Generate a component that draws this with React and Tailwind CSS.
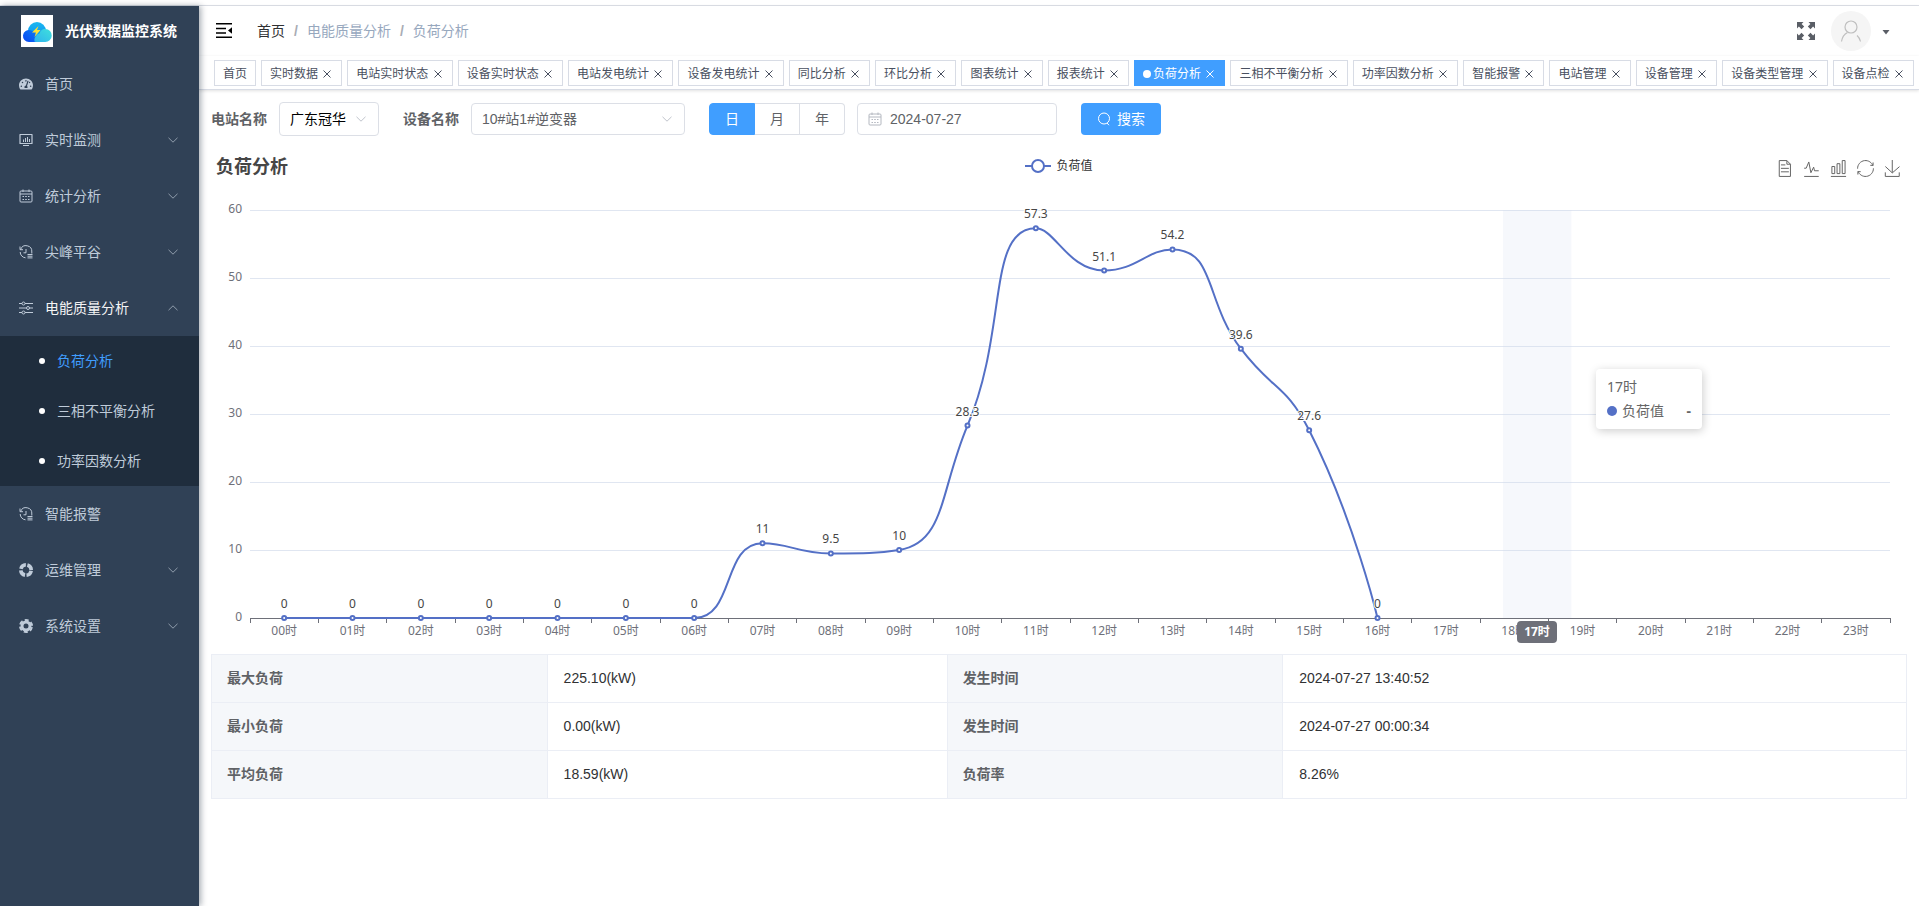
import { useLayoutEffect, useRef, useState } from "react";
import { FaTachometerAlt } from "react-icons/fa";

const HOURS = Array.from({ length: 24 }, (_, i) => String(i).padStart(2, "0") + "时");
const LOADS = [0, 0, 0, 0, 0, 0, 0, 11, 9.5, 10, 28.3, 57.3, 51.1, 54.2, 39.6, 27.6, 0];

const TAGS = [
  "首页", "实时数据", "电站实时状态", "设备实时状态", "电站发电统计", "设备发电统计",
  "同比分析", "环比分析", "图表统计", "报表统计", "负荷分析", "三相不平衡分析",
  "功率因数分析", "智能报警", "电站管理", "设备管理", "设备类型管理", "设备点检",
];

const SUMMARY = [
  ["最大负荷", "225.10(kW)", "发生时间", "2024-07-27 13:40:52"],
  ["最小负荷", "0.00(kW)", "发生时间", "2024-07-27 00:00:34"],
  ["平均负荷", "18.59(kW)", "负荷率", "8.26%"],
];

const TOOLS = [
  { name: "数据视图", d: "M17.5,17.3H33 M45.4,29.5h-28 M11.5,2v56H51V14.8L38.4,2H11.5z M38.4,2.2v12.7H51 M45.4,41.7h-28" },
  { name: "切换为折线图", d: "M4.1,28.9h7.1l9.3-22l7.4,38l9.7-19.7l3,12.8h14.9M4.1,58h51.4" },
  { name: "切换为柱状图", d: "M6.7,22.9h10V48h-10V22.9zM24.9,13h10v35h-10V13zM43.2,2h10v46h-10V2zM3.1,58h53.7" },
  { name: "还原", d: "M47,18.9h9.8V8.7 M56.3,20.1 C52.1,9,40.5,0.6,26.8,2.1C12.6,3.7,1.6,16.2,2.1,30.6 M13,41.1H3.1v10.2 M3.7,39.9c4.2,11.1,15.8,19.5,29.5,18 c14.2-1.6,25.2-14.1,24.7-28.5" },
  { name: "保存为图片", d: "M4.7,22.9L29.3,45.5L54.7,23.4M4.6,43.6L4.6,58L53.8,58L53.8,43.6M29.2,45.1L29.2,0" },
];

const Chevron = ({ up = false, className = "" }) => (
  <svg className={className} width="12" height="12" viewBox="0 0 12 12" fill="none" stroke="currentColor">
    <path d={up ? "M1.5 8.2 6 3.8l4.5 4.4" : "M1.5 3.8 6 8.2l4.5-4.4"} />
  </svg>
);

const Line = ({ children }) => (
  <svg width="14" height="14" viewBox="0 0 14 14" fill="none" stroke="currentColor">
    {children}
  </svg>
);

const MonitorIcon = () => (
  <Line>
    <path d="M1 1.500h12v9H1z" strokeLinejoin="round" strokeWidth="1.2" />
    <path d="M4.500 9V6.500M6.500 9V5M8.500 9V4M10.500 9V6M4 12.500h6" />
  </Line>
);

const CalendarIcon = () => (
  <Line>
    <rect x="1" y="2" width="12" height="11" rx="1" />
    <path d="M1 5h12M4 .5v2.5M10 .5v2.5M3.5 7.5h1.5M6.2 7.5h1.6M9 7.5h1.5M3.5 10.5h1.5M6.2 10.5h1.6M9 10.5h1.5" />
  </Line>
);

const HistoryIcon = () => (
  <Line>
    <path d="M1 1.5v3.2h3M1.6 4.4A5.8 5.8 0 0 1 12.8 7v1.5M1.2 7a5.8 5.8 0 0 0 5.3 5.8M7 4v3.8H4.5" />
    <path d="M8.5 9.5h5M8.5 11.2h5M8.5 12.9h5" />
  </Line>
);

const SlidersIcon = () => (
  <Line>
    <path d="M0 2.5h3M6 2.5h8M0 7h7.5M10.5 7H14M0 11.5h3M6 11.5h8" />
    <circle cx="4.5" cy="2.5" r="1.5" />
    <circle cx="9" cy="7" r="1.5" />
    <circle cx="4.5" cy="11.5" r="1.5" />
  </Line>
);

const LifebuoyIcon = () => (
  <svg width="14" height="14" viewBox="0 0 14 14" fill="none" stroke="currentColor" strokeWidth="3.6">
    <circle cx="7" cy="7" r="5.2" strokeDasharray="6.6 1.57" strokeDashoffset="-.8" />
  </svg>
);

const GearIcon = () => (
  <svg width="14" height="14" viewBox="0 0 14 14" fill="none" stroke="currentColor">
    <circle cx="7" cy="7" r="4" strokeWidth="3" />
    <circle cx="7" cy="7" r="6" strokeWidth="2" strokeDasharray="4 2.28" strokeDashoffset="-1.14" />
  </svg>
);

const MENU = [
  { title: "首页", icon: <FaTachometerAlt size={14} /> },
  { title: "实时监测", icon: <MonitorIcon />, group: true },
  { title: "统计分析", icon: <CalendarIcon />, group: true },
  { title: "尖峰平谷", icon: <HistoryIcon />, group: true },
  {
    title: "电能质量分析",
    icon: <SlidersIcon />,
    group: true,
    children: ["负荷分析", "三相不平衡分析", "功率因数分析"],
  },
  { title: "智能报警", icon: <HistoryIcon /> },
  { title: "运维管理", icon: <LifebuoyIcon />, group: true },
  { title: "系统设置", icon: <GearIcon />, group: true },
];

const Logo = () => (
  <svg className="bg-white" width="32" height="32" viewBox="0 0 32 32">
    <defs>
      <linearGradient id="cloudTop" x1="0" y1="0" x2="0" y2="1">
        <stop offset="0" stopColor="#1cb8ee" />
        <stop offset="1" stopColor="#0a8cf5" />
      </linearGradient>
      <linearGradient id="cloudLeft" x1="0" y1="1" x2="1" y2="0">
        <stop offset="0" stopColor="#0a45f2" />
        <stop offset="1" stopColor="#0b7df5" />
      </linearGradient>
      <linearGradient id="cloudRight" x1="0" y1="1" x2="1" y2="0">
        <stop offset="0" stopColor="#2fb4ee" />
        <stop offset="1" stopColor="#3fe0dc" />
      </linearGradient>
    </defs>
    <path d="M7 16a9 9 0 1 1 18 0l-9 8z" fill="url(#cloudTop)" />
    <path d="M8 27a6 6 0 1 1 1.500-11.800c4 .8 6.500 4.300 6.500 8.800l-1 3z" fill="url(#cloudLeft)" />
    <path d="M13.500 26.500c-.5-4 1.500-7 5-8 1-3.500 3.500-5 6-4.500a6.500 6.500 0 0 1-.5 13H15z" fill="url(#cloudRight)" />
    <path d="M17.500 11l-6.500 6.500h4L13.500 22l6-7h-3.500z" fill="#ffe033" />
  </svg>
);

const Sidebar = () => (
  <aside className="relative z-10 w-[199px] shrink-0 bg-[#304156] text-[#bfcbd9] shadow-[2px_0_6px_rgba(0,21,41,0.35)]">
    <a href="#" className="flex h-[50px] items-center gap-3 pl-[21px] text-sm font-bold text-white">
      <Logo />
      光伏数据监控系统
    </a>
    <nav>
      <ul>
        {MENU.map((item) => (
          <li key={item.title}>
            <a
              href="#"
              className={`flex h-14 items-center gap-3 pr-5 pl-[19px] ${item.children ? "text-[#f4f4f5]" : ""}`}
            >
              <span className="text-[#bfcbd9]">{item.icon}</span>
              <span className="flex-1">{item.title}</span>
              {item.group && <Chevron up={!!item.children} className="text-[#909dac]" />}
            </a>
            {item.children && (
              <ul className="bg-[#1f2d3d]">
                {item.children.map((child, i) => (
                  <li key={child}>
                    <a
                      href="#"
                      className={`flex h-[50px] items-center gap-3 pl-[39px] ${i === 0 ? "text-[#409eff]" : ""}`}
                    >
                      <span className="h-1.5 w-1.5 rounded-full bg-white" />
                      {child}
                    </a>
                  </li>
                ))}
              </ul>
            )}
          </li>
        ))}
      </ul>
    </nav>
  </aside>
);

const Navbar = () => (
  <header className="flex h-[50px] items-center bg-white pl-[15px] shadow-[0_1px_4px_rgba(0,21,41,0.08)]">
    <button aria-label="折叠菜单" className="text-black">
      <svg width="20" height="20" viewBox="0 0 20 20" fill="currentColor">
        <path d="M2 2h16v1.500H2zM2 6.800h10v1.500H2zM2 11.200h10v1.500H2zM2 15.500h16V17H2zM18 6.300v6.400L14 9.500z" />
      </svg>
    </button>
    <nav className="ml-[23px] flex gap-[9px] text-[#97a8be]">
      <a href="#" className="text-[#303133]">首页</a>
      <span className="font-bold text-[#a8acb4]">/</span>
      <span>电能质量分析</span>
      <span className="font-bold text-[#a8acb4]">/</span>
      <span>负荷分析</span>
    </nav>
    <div className="ml-auto flex items-center pr-7">
      <button aria-label="全屏" className="text-[#5a5e66]">
        <svg width="20" height="20" viewBox="0 0 20 20" fill="currentColor">
          <path d="M1 1h6.5L5.600 2.900l2.600 2.600-2.700 2.700-2.600-2.600L1 7.500zM19 1v6.500l-1.900-1.900-2.600 2.600-2.700-2.700 2.600-2.600L12.500 1zM1 19v-6.500l1.900 1.900 2.600-2.600 2.700 2.700-2.600 2.600L7.500 19zM19 19h-6.500l1.900-1.900-2.600-2.600 2.700-2.700 2.600 2.600 1.900-1.900z" />
        </svg>
      </button>
      <button aria-label="用户菜单" className="ml-[15px] flex items-center gap-2.5">
        <span className="flex h-10 w-10 items-center justify-center rounded-full bg-[#f5f5f5]">
          <svg width="22" height="22" viewBox="0 0 22 22" fill="none" stroke="#bfbfbf" strokeWidth="1.2">
            <circle cx="11" cy="7" r="6" />
            <path d="M1.500 21.500c.8-5 3-7.500 6-9M17 15.500c1.800 1.500 3 3.500 3.500 6" />
          </svg>
        </span>
        <svg className="mt-0.5" width="10" height="10" viewBox="0 0 10 10" fill="#5a5e66">
          <path d="M1.500 3h7L5 7.500z" />
        </svg>
      </button>
    </div>
  </header>
);

const TagsView = () => (
  <nav className="flex h-[34px] gap-[5px] overflow-hidden border-b border-[#d8dce5] bg-white pt-1 pl-[15px] text-xs whitespace-nowrap shadow-[0_1px_3px_rgba(0,0,0,0.12)]">
    {TAGS.map((tag, i) => {
      const active = tag === "负荷分析";
      return (
        <span
          key={tag}
          className={`flex h-[26px] shrink-0 items-center border px-2 pt-0.5 ${
            active ? "border-[#409eff] bg-[#409eff] text-white" : "border-[#d8dce5] bg-white text-[#495060]"
          }`}
        >
          {active && <span className="mr-0.5 h-2 w-2 rounded-full bg-white" />}
          <a href="#" className="whitespace-pre">{i === 0 ? tag : tag + " "}</a>
          {i > 0 && (
            <button aria-label={`关闭${tag}`}>
              <svg width="12" height="12" viewBox="0 0 12 12" fill="none" stroke="currentColor">
                <path d="M2.500 2.500l7 7M9.500 2.500l-7 7" />
              </svg>
            </button>
          )}
        </span>
      );
    })}
  </nav>
);

const FilterBar = () => {
  const [range, setRange] = useState("日");
  const [date, setDate] = useState("2024-07-27");

  return (
    <form className="flex items-center text-[#606266]" onSubmit={(e) => e.preventDefault()}>
      <label htmlFor="station" className="mr-3 font-bold">电站名称</label>
      <span className="relative mr-6">
        <select id="station" className="block h-[34px] w-[100px] appearance-none rounded border border-[#dcdfe6] bg-white px-2.5 text-black">
          <option>广东冠华</option>
        </select>
        <Chevron className="pointer-events-none absolute top-[11px] right-3 text-[#c0c4cc]" />
      </span>

      <label htmlFor="device" className="mr-3 font-bold">设备名称</label>
      <span className="relative mr-6">
        <select id="device" className="block h-8 w-[214px] appearance-none rounded border border-[#dcdfe6] bg-white px-2.5">
          <option>10#站1#逆变器</option>
        </select>
        <Chevron className="pointer-events-none absolute top-2.5 right-3 text-[#c0c4cc]" />
      </span>

      <fieldset className="mr-3 flex h-8">
        {["日", "月", "年"].map((r) => (
          <label
            key={r}
            className={`relative flex items-center border-y border-r px-[15px] first:rounded-l first:border-l last:rounded-r ${
              range === r ? "border-[#409eff] bg-[#409eff] text-white" : "border-[#dcdfe6] bg-white"
            }`}
          >
            <input type="radio" name="range" className="sr-only" checked={range === r} onChange={() => setRange(r)} />
            {r}
          </label>
        ))}
      </fieldset>

      <label className="mr-6 flex h-8 w-[200px] items-center rounded border border-[#dcdfe6] bg-white pl-2.5">
        <span className="text-[#b4b8c0]"><CalendarIcon /></span>
        <input
          type="text"
          aria-label="日期"
          className="ml-2 w-full outline-none"
          value={date}
          onChange={(e) => setDate(e.target.value)}
        />
      </label>

      <button className="flex h-8 items-center gap-1.5 rounded bg-[#409eff] px-4 text-white">
        <svg width="14" height="14" viewBox="0 0 14 14" fill="none" stroke="currentColor">
          <circle cx="7" cy="6.5" r="5.5" />
          <path d="M10 11l2 2.2" />
        </svg>
        搜索
      </button>
    </form>
  );
};

// Bezier smoothing that keeps the control points between neighbouring points
const between = (v, a, b) => Math.max(Math.min(v, Math.max(a, b)), Math.min(a, b));

const smoothPath = (pts) => {
  const k = 0.5;
  let d = `M${pts[0][0]},${pts[0][1]}`;
  let c0 = pts[0];
  for (let i = 1; i < pts.length; i++) {
    const [px, py] = pts[i - 1];
    const [x, y] = pts[i];
    let c1 = [x, y];
    let next0 = [x, y];
    if (i < pts.length - 1) {
      const [nx, ny] = pts[i + 1];
      const prevLen = Math.hypot(x - px, y - py);
      const nextLen = Math.hypot(nx - x, ny - y);
      const ratio = nextLen / (nextLen + prevLen);
      const n0x = between(x + (nx - px) * k * ratio, x, nx);
      const n0y = between(y + (ny - py) * k * ratio, y, ny);
      c1 = [
        between(x - ((n0x - x) * prevLen) / nextLen, px, x),
        between(y - ((n0y - y) * prevLen) / nextLen, py, y),
      ];
      next0 = [x + ((x - c1[0]) * nextLen) / prevLen, y + ((y - c1[1]) * nextLen) / prevLen];
    }
    d += `C${c0[0]},${c0[1]},${c1[0]},${c1[1]},${x},${y}`;
    c0 = next0;
  }
  return d;
};

const LoadChart = () => {
  const box = useRef(null);
  const [width, setWidth] = useState(1200);

  useLayoutEffect(() => {
    const measure = () => setWidth(box.current.clientWidth);
    measure();
    const ro = new ResizeObserver(measure);
    ro.observe(box.current);
    return () => ro.disconnect();
  }, []);

  const left = 39;
  const right = width - 17;
  const top = 28;
  const bottom = 436;
  const band = (right - left) / 24;
  const xAt = (i) => left + band * (i + 0.5);
  const yAt = (v) => bottom - (v / 60) * (bottom - top);
  const points = LOADS.map((v, i) => [xAt(i), yAt(v)]);
  const pointer = Math.round(left + (right - left) * 0.785);

  return (
    <section className="mt-3.5">
      <div className="grid h-8 grid-cols-3 items-center">
        <h2 className="pt-0.5 pl-[5px] text-lg font-bold text-[#464646]">负荷分析</h2>
        <div className="flex items-center justify-center gap-[5px] text-xs text-[#333]">
          <svg width="26" height="14" viewBox="0 0 26 14" fill="white" stroke="#5470c6" strokeWidth="2">
            <path d="M0 7h26" />
            <circle cx="13" cy="7" r="6" />
          </svg>
          负荷值
        </div>
        <div className="flex justify-end gap-2.5 pr-1.5">
          {TOOLS.map((tool) => (
            <button key={tool.name} aria-label={tool.name}>
              <svg className="mt-1 overflow-visible" width="17" height="17" viewBox="0 0 60 60" fill="none" stroke="#666">
                <path d={tool.d} vectorEffect="non-scaling-stroke" />
              </svg>
            </button>
          ))}
        </div>
      </div>

      <div ref={box} className="relative font-['Noto_Sans','Noto_Sans_CJK_SC',sans-serif] text-xs">
        <svg className="block w-full" height="464">
          {[0, 10, 20, 30, 40, 50, 60].map((v) => (
            <g key={v}>
              {v > 0 && (
                <path d={`M${left} ${yAt(v) + 0.5}H${right}`} stroke="#e0e6f1" shapeRendering="crispEdges" />
              )}
              <text x={left - 8} y={yAt(v) + 3} textAnchor="end" fill="#6e7079">{v}</text>
            </g>
          ))}
          <rect x={pointer - 34} y={top} width={band} height={bottom - top} fill="rgba(210,219,238,0.2)" />
          <path d={`M${left} ${bottom + 0.5}H${right}`} stroke="#6e7079" shapeRendering="crispEdges" />
          {Array.from({ length: 25 }, (_, i) => (
            <path
              key={i}
              d={`M${Math.floor(left + band * i) + 0.5} ${bottom}v5`}
              stroke="#6e7079"
              shapeRendering="crispEdges"
            />
          ))}
          {HOURS.map((h, i) => (
            <text key={h} x={xAt(i)} y="453" textAnchor="middle" fill="#6e7079">{h}</text>
          ))}
          <path d={smoothPath(points)} fill="none" stroke="#5470c6" strokeWidth="2" />
          {points.map(([x, y], i) => (
            <circle key={i} cx={x} cy={y} r="2" fill="white" stroke="#5470c6" strokeWidth="2" />
          ))}
          {points.map(([x, y], i) => (
            <text
              key={i}
              x={x}
              y={y - 10}
              textAnchor="middle"
              fill="#464646"
              stroke="white"
              strokeWidth="2"
              paintOrder="stroke"
            >
              {LOADS[i]}
            </text>
          ))}
        </svg>

        {/* Axis pointer label */}
        <div
          className="absolute top-[439px] flex h-[22px] w-10 -translate-x-1/2 items-center justify-center rounded-sm bg-[#6e7079] font-bold text-white"
          style={{ left: pointer }}
        >
          17时
        </div>

        {/* Tooltip */}
        <div
          className="absolute top-[187px] h-[60px] w-[106px] rounded bg-white p-[11px] text-sm leading-none text-[#666] shadow-[1px_2px_10px_rgba(0,0,0,0.2)]"
          style={{ left: pointer + 59 }}
        >
          <div>17时</div>
          <div className="mt-2.5 flex items-center">
            <span className="mr-[5px] h-2.5 w-2.5 rounded-full bg-[#5470c6]" />
            负荷值
            <b className="ml-auto">-</b>
          </div>
        </div>
      </div>
    </section>
  );
};

const SummaryTable = () => (
  <table className="mt-2 w-full table-fixed border-collapse text-left">
    <colgroup>
      <col className="w-[19.8%]" />
      <col className="w-[23.6%]" />
      <col className="w-[19.8%]" />
      <col />
    </colgroup>
    <tbody>
      {SUMMARY.map((row) => (
        <tr key={row[0]} className="h-12">
          {row.map((cell, i) =>
            i % 2 === 0 ? (
              <th key={i} scope="row" className="border border-[#ebeef5] bg-[#f5f7fa] px-[15px] pb-0.5 font-bold text-[#606266]">
                {cell}
              </th>
            ) : (
              <td key={i} className="border border-[#ebeef5] px-4 pb-0.5 text-[#303133]">{cell}</td>
            )
          )}
        </tr>
      ))}
    </tbody>
  </table>
);

export default function App() {
  return (
    <div className="flex min-h-screen flex-col bg-white font-['Liberation_Sans','Noto_Sans_CJK_SC',sans-serif] text-sm">
      <div className="h-1.5 border-b border-[#dcdfe6]" />
      <div className="flex flex-1">
        <Sidebar />
        <div className="min-w-0 flex-1">
          <Navbar />
          <TagsView />
          <main className="px-3 pt-3">
            <FilterBar />
            <LoadChart />
            <SummaryTable />
          </main>
        </div>
      </div>
    </div>
  );
}
